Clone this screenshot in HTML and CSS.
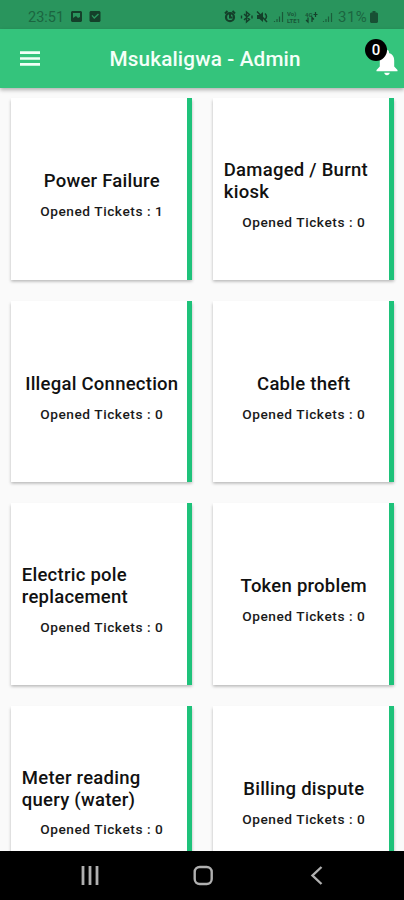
FILE: index.html
```html
<!DOCTYPE html>
<html lang="en">
<head>
<meta charset="utf-8">
<meta name="viewport" content="width=device-width, initial-scale=1">
<title>Msukaligwa - Admin</title>
<link rel="stylesheet" href="styles.css">
</head>
<body>
<div class="screen">
  <div class="status">
    <span class="clock">23:51</span>
    <svg class="note-icons" width="30" height="12" viewBox="0 0 30 12">
      <path fill="currentColor" fill-rule="evenodd" d="M1 0h9l1 1v9l-1 1H1l-1-1V1zM2 2v5l3-2 2 2 2-1V2zM19.500 0h9l1 1v9l-1 1h-9l-1-1V1zM20.500 4.800l2.700 3.200 4.800-4.500-1-1-3.800 3.500-1.700-2z"/>
    </svg>
    <svg class="system-icons" width="112" height="14" viewBox="0 0 112 14" fill="none" stroke="currentColor">
      <path stroke-width="2" d="M1 3.500L3.500 1M8.500 1L11 3.500M6 4v3.500h2.500"/>
      <circle cx="6" cy="7.200" r="4" stroke-width="2.200"/>
      <path stroke-width="1.400" d="M20 4l5.500 5.500L22.500 12V2l3 2.500L20 10M17.500 5.500v3M28 5.500v3"/>
      <path fill="currentColor" stroke="none" d="M33 5h2.500L39 2v10l-3.500-3H33z"/>
      <path stroke-width="1.500" d="M33 1.500l10 10.500M41 3.500q3 3 0 6"/>
      <path stroke-width="1.200" opacity=".7" d="M50.500 11v1M53 9v3M55.500 6.500V12M58.500 2v10"/>
      <path stroke-width="1.200" opacity=".65" d="M99.500 11v1M102 9v3M104.500 6.500V12M107.500 3v9"/>
      <g fill="currentColor" stroke="none" class="micro">
        <text x="63" y="5.500">Vo)</text><text x="63" y="12.500">LTE1</text>
        <text x="81" y="6.500">4G</text>
      </g>
      <path stroke-width="1.200" d="M84 7.500V12l-2-2M88 12V7.500l2 2M91.500 2v5M89.500 4.500h4"/>
    </svg>
    <span class="percent">31%</span>
    <svg class="battery" width="8" height="12" viewBox="0 0 8 12"><path fill="currentColor" d="M2.500 0h3v1.500H7l1 1V11l-1 1H1l-1-1V2.500l1-1h1.500z"/></svg>
  </div>
  <header class="appbar">
    <svg class="menu" width="20" height="15" viewBox="0 0 20 15"><path fill="#f1fff6" d="M0 .3h20v2.600H0zM0 6.200h20v2.600H0zM0 12.100h20v2.600H0z"/></svg>
    <h1>Msukaligwa - Admin</h1>
    <div class="alerts">
      <svg width="22" height="26" viewBox="0 0 22 26"><path fill="#fff" d="M11 0c1.200 0 2 .8 2 2v1c3.500.9 5.200 3.800 5.200 7.300v6.200L21.500 20v1.200H.5V20l3.300-3.500v-6.200C3.800 6.800 5.500 3.900 9 3V2c0-1.200.8-2 2-2zM8.200 22.800h5.600c-.3 1.500-1.300 2.400-2.800 2.400s-2.500-.9-2.800-2.400z"/></svg>
      <span class="badge">0</span>
    </div>
  </header>
  <main class="grid">
    <section class="card"><h2>Power Failure</h2><p>Opened Tickets : 1</p></section>
    <section class="card"><h2>Damaged / Burnt kiosk</h2><p>Opened Tickets : 0</p></section>
    <section class="card"><h2>Illegal Connection</h2><p>Opened Tickets : 0</p></section>
    <section class="card"><h2>Cable theft</h2><p>Opened Tickets : 0</p></section>
    <section class="card"><h2>Electric pole replacement</h2><p>Opened Tickets : 0</p></section>
    <section class="card"><h2>Token problem</h2><p>Opened Tickets : 0</p></section>
    <section class="card"><h2>Meter reading query (water)</h2><p>Opened Tickets : 0</p></section>
    <section class="card"><h2>Billing dispute</h2><p>Opened Tickets : 0</p></section>
  </main>
  <nav class="navbar">
    <svg width="404" height="49" viewBox="0 0 404 49" fill="none" stroke="#b0b0b0">
      <path stroke-width="2.800" d="M83 15v19M90 15v19M97 15v19"/>
      <rect x="194.700" y="16" width="17" height="17" rx="5" stroke-width="2.400"/>
      <path stroke-width="2.400" d="M321.500 16l-9 8.500 9 8.500"/>
    </svg>
  </nav>
</div>
</body>
</html>
```
FILE: styles.css
```css
* { box-sizing: border-box; }
body { margin: 0; font-family: Roboto, "Liberation Sans", sans-serif; }
h1, h2, p { margin: 0; }
svg { display: block; flex: none; }
.screen {
  width: 404px;
  height: 900px;
  display: flex;
  flex-direction: column;
  overflow: hidden;
  background: #fafafa;
}
.status {
  flex: none;
  height: 28.500px;
  display: flex;
  align-items: center;
  padding: 6px 26px 0 28px;
  background: #29955d;
  color: #14402a;
}
.clock { width: 36px; font-size: 14.500px; color: #1b6540; }
.note-icons { margin-left: 7px; }
.system-icons { margin-left: auto; }
.micro { font-size: 6px; font-weight: 700; opacity: .75; }
.percent { width: 32px; margin-left: 2px; font-size: 15px; letter-spacing: .5px; color: #1b6540; }
.battery { opacity: .8; }
.appbar {
  flex: none;
  position: relative;
  z-index: 1;
  height: 59px;
  display: flex;
  align-items: center;
  padding: 1px 6px 0 20px;
  background: #34c47c;
  box-shadow: 0 2px 4px rgba(0, 0, 0, .3);
}
.appbar h1 {
  margin-left: 69.500px;
  font-size: 20.700px;
  font-weight: 550;
  line-height: 24px;
  letter-spacing: .15px;
  color: #f4fff8;
  white-space: nowrap;
}
.alerts { position: relative; margin: 9px 0 0 auto; }
.badge {
  position: absolute;
  left: -11px;
  top: -11px;
  width: 22px;
  height: 22px;
  border-radius: 50%;
  background: #000;
  color: #fff;
  font-size: 15px;
  font-weight: 500;
  line-height: 22px;
  text-align: center;
}
.grid {
  flex: 1;
  min-height: 0;
  overflow: hidden;
  display: grid;
  grid-template-columns: 181.500px 181.500px;
  grid-auto-rows: 181.500px;
  gap: 21px 20.500px;
  padding: 10.700px 10.800px 0;
}
.card {
  display: flex;
  flex-direction: column;
  align-items: center;
  justify-content: center;
  padding: 12.500px 5.500px 0 11px;
  border-right: 5.500px solid #1ec27a;
  background: #fff;
  box-shadow: 0 1.500px 3px rgba(0, 0, 0, .28);
}
.card h2 {
  font-size: 18.500px;
  font-weight: 550;
  line-height: 21.700px;
  letter-spacing: .25px;
  color: #111;
}
.card p {
  margin-top: 10px;
  font-size: 13.700px;
  font-weight: 550;
  line-height: 16px;
  letter-spacing: .55px;
  color: #1a1a1a;
  white-space: nowrap;
}
.navbar { flex: none; height: 49.500px; background: #000; }
```
